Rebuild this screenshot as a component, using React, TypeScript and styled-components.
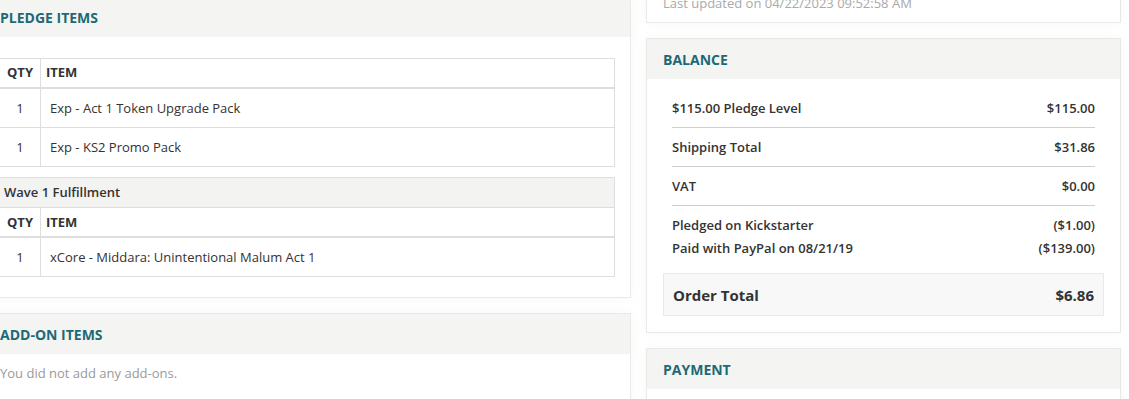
import React from "react";
import styled, { createGlobalStyle } from "styled-components";

const GlobalStyle = createGlobalStyle`
  html, body {
    margin: 0;
    padding: 0;
    background: #ffffff;
    overflow: hidden;
  }
  body {
    font-family: "Open Sans", "DejaVu Sans", Arial, sans-serif;
    font-size: 13px;
    color: #333333;
  }
  * { box-sizing: border-box; }
`;

const Page = styled.div`
  display: flex;
  align-items: flex-start;
  gap: 15px;
  margin: -4px 0 0 -17px;
  width: 1160px;
`;

const LeftCol = styled.div`
  width: 648px;
  display: flex;
  flex-direction: column;
  gap: 15px;
`;

const RightCol = styled.div`
  width: 475px;
  margin-top: -20px;
  display: flex;
  flex-direction: column;
  gap: 15px;
`;

const Panel = styled.section`
  background: #ffffff;
  border: 1px solid #e9eae8;
  box-shadow: 0 0 12px rgba(0, 0, 0, 0.035);
`;

const PanelHeader = styled.h2`
  margin: 0;
  height: 40px;
  padding: 0 16px;
  display: flex;
  align-items: center;
  background: #f4f5f3;
  color: #1e6976;
  font-size: 14px;
  font-weight: 700;
  text-transform: uppercase;
`;

const PanelBody = styled.div<{ $pad: string }>`
  padding: ${(p) => p.$pad};
`;

const Muted = styled.p<{ $light?: boolean }>`
  margin: 0;
  font-size: 13px;
  line-height: 18px;
  color: ${(p) => (p.$light ? "#a9a9a9" : "#9a9a9a")};
`;

const ItemsTable = styled.table<{ $gap?: boolean }>`
  width: 100%;
  border-collapse: collapse;
  margin-bottom: ${(p) => (p.$gap ? "10px" : "0")};
  font-size: 13px;
  color: #333;
`;

const GroupCell = styled.th`
  text-align: left;
  font-weight: 600;
  background: #f3f4f2;
  border: 1px solid #dedede;
  padding: 5px 5px 4px 4px;
  height: 30px;
  line-height: 19px;
`;

const HeadCell = styled.th<{ $qty?: boolean; $tall?: boolean }>`
  text-align: ${(p) => (p.$qty ? "center" : "left")};
  width: ${(p) => (p.$qty ? "41px" : "auto")};
  font-weight: 700;
  border: 1px solid #dedede;
  border-bottom: 2px solid #dedede;
  padding: ${(p) => (p.$tall ? "5px 5px 4px" : "4px 5px")};
  height: ${(p) => (p.$tall ? "30px" : "29px")};
  line-height: 19px;
`;

const Cell = styled.td<{ $qty?: boolean }>`
  text-align: ${(p) => (p.$qty ? "center" : "left")};
  border: 1px solid #dedede;
  padding: 10px 10px 10px ${(p) => (p.$qty ? "10px" : "9px")};
  line-height: 18px;
  height: 39px;
`;

const Rows = styled.div`
  padding: 0 9px 0 9px;
`;

const Row = styled.div<{ $line?: boolean }>`
  display: flex;
  justify-content: space-between;
  font-weight: 600;
  font-size: 13px;
  line-height: 18px;
  padding: 10px 0;
  border-bottom: ${(p) => (p.$line ? "1px solid #cfcfcf" : "none")};
`;

const PayLines = styled.div`
  padding: 8px 0 13px;
`;

const PayLine = styled.div`
  display: flex;
  justify-content: space-between;
  font-weight: 600;
  font-size: 13px;
  line-height: 23px;
`;

const TotalBox = styled.div`
  display: flex;
  justify-content: space-between;
  align-items: center;
  height: 43px;
  padding: 0 9px 0 9px;
  background: #f8f8f8;
  border: 1px solid #e9e9e9;
  font-size: 15px;
  font-weight: 700;
  color: #333;
`;

type Item = { qty: number; name: string };

const pledgeItems: Item[] = [
  { qty: 1, name: "Exp - Act 1 Token Upgrade Pack" },
  { qty: 1, name: "Exp - KS2 Promo Pack" },
];

const waveItems: Item[] = [
  { qty: 1, name: "xCore - Middara: Unintentional Malum Act 1" },
];

const TableHead = ({ tall }: { tall?: boolean }) => (
  <tr>
    <HeadCell $qty $tall={tall}>
      QTY
    </HeadCell>
    <HeadCell $tall={tall}>ITEM</HeadCell>
  </tr>
);

const ItemRows = ({ items }: { items: Item[] }) => (
  <>
    {items.map((it) => (
      <tr key={it.name}>
        <Cell $qty>{it.qty}</Cell>
        <Cell>{it.name}</Cell>
      </tr>
    ))}
  </>
);

export default function App() {
  return (
    <>
      <GlobalStyle />
      <Page>
        <LeftCol>
          <Panel>
            <PanelHeader>Pledge Items</PanelHeader>
            <PanelBody $pad="21px 15px 20px">
              <ItemsTable $gap>
                <thead>
                  <TableHead />
                </thead>
                <tbody>
                  <ItemRows items={pledgeItems} />
                </tbody>
              </ItemsTable>
              <ItemsTable>
                <thead>
                  <tr>
                    <GroupCell colSpan={2}>Wave 1 Fulfillment</GroupCell>
                  </tr>
                  <TableHead tall />
                </thead>
                <tbody>
                  <ItemRows items={waveItems} />
                </tbody>
              </ItemsTable>
            </PanelBody>
          </Panel>
          <Panel>
            <PanelHeader>Add-on Items</PanelHeader>
            <PanelBody $pad="10px 16px 30px">
              <Muted>You did not add any add-ons.</Muted>
            </PanelBody>
          </Panel>
        </LeftCol>
        <RightCol>
          <Panel>
            <PanelBody $pad="17px 16px 10px">
              <Muted $light>Last updated on 04/22/2023 09:52:58 AM</Muted>
            </PanelBody>
          </Panel>
          <Panel>
            <PanelHeader>Balance</PanelHeader>
            <PanelBody $pad="10px 16px 16px">
              <Rows>
                <Row $line>
                  <span>$115.00 Pledge Level</span>
                  <span>$115.00</span>
                </Row>
                <Row $line>
                  <span>Shipping Total</span>
                  <span>$31.86</span>
                </Row>
                <Row $line>
                  <span>VAT</span>
                  <span>$0.00</span>
                </Row>
                <PayLines>
                  <PayLine>
                    <span>Pledged on Kickstarter</span>
                    <span>($1.00)</span>
                  </PayLine>
                  <PayLine>
                    <span>Paid with PayPal on 08/21/19</span>
                    <span>($139.00)</span>
                  </PayLine>
                </PayLines>
              </Rows>
              <TotalBox>
                <span>Order Total</span>
                <span>$6.86</span>
              </TotalBox>
            </PanelBody>
          </Panel>
          <Panel>
            <PanelHeader>Payment</PanelHeader>
            <PanelBody $pad="16px">
              <Muted>&nbsp;</Muted>
            </PanelBody>
          </Panel>
        </RightCol>
      </Page>
    </>
  );
}
